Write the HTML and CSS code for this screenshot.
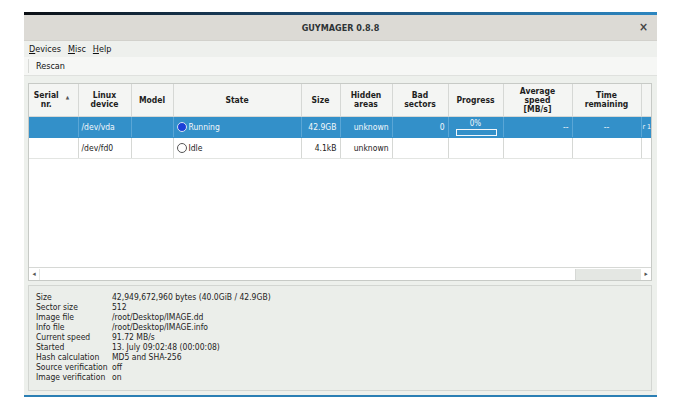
FILE: index.html
```html
<!DOCTYPE html>
<html>
<head>
<meta charset="utf-8">
<link rel="stylesheet" href="styles.css">
</head>
<body>
<div class="window">
  <div class="strip"></div>
  <div class="titlebar">
    <span class="title">GUYMAGER 0.8.8</span>
    <span class="close">×</span>
  </div>
  <div class="menubar">
    <span class="menu"><u>D</u>evices</span>
    <span class="menu"><u>M</u>isc</span>
    <span class="menu"><u>H</u>elp</span>
  </div>
  <div class="toolbar">
    <span class="handle"></span>
    <span class="tool">Rescan</span>
  </div>
  <div class="content">
    <div class="tableframe">
      <div class="tablearea">
        <table class="grid">
          <colgroup>
            <col class="c-serial"><col class="c-dev"><col class="c-model"><col class="c-state"><col class="c-size"><col class="c-hidden"><col class="c-bad"><col class="c-prog"><col class="c-speed"><col class="c-time"><col class="c-extra">
          </colgroup>
          <thead>
            <tr>
              <th><span class="sorthead">Serial<br>nr.<span class="sort">▲</span></span></th>
              <th>Linux<br>device</th>
              <th>Model</th>
              <th>State</th>
              <th>Size</th>
              <th>Hidden<br>areas</th>
              <th>Bad<br>sectors</th>
              <th>Progress</th>
              <th>Average<br>speed<br>[MB/s]</th>
              <th>Time<br>remaining</th>
              <th></th>
            </tr>
          </thead>
          <tbody>
            <tr class="sel">
              <td></td>
              <td>/dev/vda</td>
              <td></td>
              <td><span class="radio on"></span>Running</td>
              <td class="r">42.9GB</td>
              <td class="r">unknown</td>
              <td class="r">0</td>
              <td class="prog"><div class="pct">0%</div><div class="bar"></div></td>
              <td class="r">--</td>
              <td class="c">--</td>
              <td class="extra">r 1</td>
            </tr>
            <tr>
              <td></td>
              <td>/dev/fd0</td>
              <td></td>
              <td><span class="radio"></span>Idle</td>
              <td class="r">4.1kB</td>
              <td class="r">unknown</td>
              <td></td>
              <td></td>
              <td></td>
              <td></td>
              <td></td>
            </tr>
          </tbody>
        </table>
      </div>
      <div class="hscroll">
        <span class="arrow">◂</span>
        <div class="track"><div class="thumb"></div></div>
        <span class="arrow">▸</span>
      </div>
    </div>
    <div class="info">
      <div class="irow"><span class="lbl">Size</span><span>42,949,672,960 bytes (40.0GiB / 42.9GB)</span></div>
      <div class="irow"><span class="lbl">Sector size</span><span>512</span></div>
      <div class="irow"><span class="lbl">Image file</span><span>/root/Desktop/IMAGE.dd</span></div>
      <div class="irow"><span class="lbl">Info file</span><span>/root/Desktop/IMAGE.info</span></div>
      <div class="irow"><span class="lbl">Current speed</span><span>91.72 MB/s</span></div>
      <div class="irow"><span class="lbl">Started</span><span>13. July 09:02:48 (00:00:08)</span></div>
      <div class="irow"><span class="lbl">Hash calculation</span><span>MD5 and SHA-256</span></div>
      <div class="irow"><span class="lbl">Source verification</span><span>off</span></div>
      <div class="irow"><span class="lbl">Image verification</span><span>on</span></div>
    </div>
  </div>
  <div class="bottomline"></div>
</div>
</body>
</html>
```
FILE: styles.css
```css
html, body {
  margin: 0;
  padding: 0;
  background: #ffffff;
}
body {
  font-family: "DejaVu Sans Condensed", "DejaVu Sans", sans-serif;
  font-size: 9px;
  color: #222;
}
.window {
  margin: 12px 0 0 24px;
  width: 633px;
  height: 385px;
  background: #edf0ec;
  display: flex;
  flex-direction: column;
}
.strip {
  height: 3px;
  background: linear-gradient(90deg, #0b0f14 0%, #1d4a70 45%, #2c86c0 100%);
}
.titlebar {
  height: 25px;
  background: #dcdad5;
  position: relative;
  display: flex;
  align-items: center;
  justify-content: center;
  border-bottom: 1px solid #d2d1cc;
}
.title {
  font-size: 9px;
  font-weight: bold;
  color: #2e3436;
}
.close {
  position: absolute;
  right: 9px;
  top: 5px;
  font-size: 12px;
  font-weight: bold;
  color: #444;
}
.menubar {
  height: 16px;
  display: flex;
  align-items: center;
  padding-left: 5px;
  gap: 7px;
  background: #eef0ed;
}
.menu {
  font-size: 9px;
  color: #111;
}
.toolbar {
  height: 18px;
  background: #f6f7f5;
  display: flex;
  align-items: center;
  border-bottom: 1px solid #dfe1de;
}
.handle {
  width: 1px;
  height: 14px;
  background: #d8dad7;
  margin: 0 7px 0 4px;
}
.tool {
  font-size: 9px;
  color: #111;
}
.content {
  padding: 7px 5px 0 4px;
  display: flex;
  flex-direction: column;
}
.tableframe {
  height: 196px;
  border: 1px solid #c7cac6;
  background: #ffffff;
  display: flex;
  flex-direction: column;
}
.tablearea {
  flex: 1;
  overflow: hidden;
}
.grid {
  table-layout: fixed;
  border-collapse: collapse;
  width: 633px;
}
.c-serial { width: 49px; }
.c-dev { width: 53px; }
.c-model { width: 42px; }
.c-state { width: 128px; }
.c-size { width: 39px; }
.c-hidden { width: 52px; }
.c-bad { width: 56px; }
.c-prog { width: 55px; }
.c-speed { width: 69px; }
.c-time { width: 69px; }
.c-extra { width: 21px; }
.grid th {
  height: 32px;
  padding: 0 2px;
  background: #f4f5f3;
  border-right: 1px solid #d6d8d5;
  border-bottom: 1px solid #d6d8d5;
  font-weight: bold;
  font-size: 8.5px;
  line-height: 9px;
  text-align: center;
  color: #1e1e1e;
}
.sorthead {
  position: relative;
  display: inline-block;
  margin-left: -14px;
}
.sort {
  position: absolute;
  left: 32px;
  top: 2px;
  font-size: 5px;
  color: #555;
}
.grid td {
  height: 20px;
  padding: 0 3px;
  border-right: 1px solid #d6d8d5;
  border-bottom: 1px solid #e3e5e2;
  font-size: 8.5px;
  white-space: nowrap;
  overflow: hidden;
  color: #222;
}
.grid td.r { text-align: right; }
.grid td.c { text-align: center; }
.grid tr.sel td {
  background: #3390c9;
  color: #f4f8fb;
  border-right-color: #5aa6d6;
  border-bottom-color: #3390c9;
}
.radio {
  display: inline-block;
  width: 10px;
  height: 10px;
  border-radius: 50%;
  border: 1px solid #555;
  background: #fff;
  box-sizing: border-box;
  vertical-align: -2px;
  margin-right: 2px;
}
.radio.on {
  background: #1b3fd8;
  border-color: #d6e4f2;
}
.grid td.prog {
  padding: 0 5px;
  text-align: center;
}
.pct {
  font-size: 8px;
  line-height: 9px;
}
.bar {
  height: 5px;
  border: 1px solid #f2f6fa;
  margin: 1px 1px 0 2px;
}
.grid td.extra {
  padding: 0 1px;
  font-size: 7px;
}
.hscroll {
  height: 12px;
  display: flex;
  align-items: center;
  border-top: 1px solid #d6d8d5;
  background: #ffffff;
}
.arrow {
  width: 10px;
  font-size: 7px;
  color: #555;
  text-align: center;
}
.track {
  flex: 1;
  height: 11px;
  background: #e4e7e3;
  display: flex;
}
.thumb {
  width: 535px;
  background: #ffffff;
  border-right: 1px solid #d6d8d5;
  border-left: 1px solid #e4e7e3;
}
.info {
  margin-top: 4px;
  height: 98px;
  border: 1px solid #d3d6d2;
  background: #ebeeea;
  padding: 6px 0 0 7px;
  font-size: 8.5px;
  line-height: 10px;
  color: #1d1d1d;
}
.irow {
  display: flex;
}
.lbl {
  width: 76px;
  flex: none;
  white-space: nowrap;
}
.bottomline {
  margin-top: auto;
  height: 2px;
  background: #2b7fb4;
}
```
